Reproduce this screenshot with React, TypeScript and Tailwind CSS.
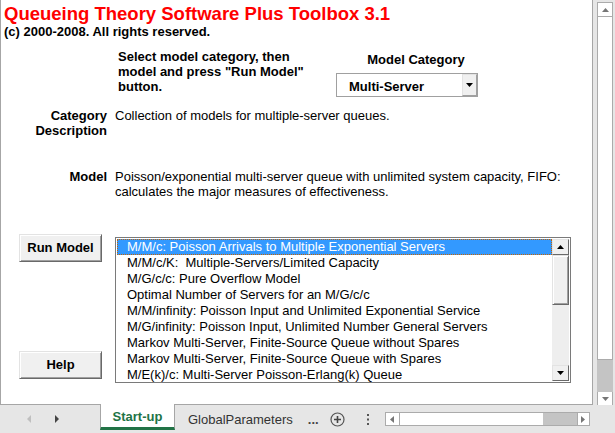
import React from 'react';

// Models offered for the Multi-Server category
const models = [
  'M/M/c: Poisson Arrivals to Multiple Exponential Servers',
  'M/M/c/K:  Multiple-Servers/Limited Capacity',
  'M/G/c/c: Pure Overflow Model',
  'Optimal Number of Servers for an M/G/c/c',
  'M/M/infinity: Poisson Input and Unlimited Exponential Service',
  'M/G/infinity: Poisson Input, Unlimited Number General Servers',
  'Markov Multi-Server, Finite-Source Queue without Spares',
  'Markov Multi-Server, Finite-Source Queue with Spares',
  'M/E(k)/c: Multi-Server Poisson-Erlang(k) Queue',
];

function Tri({ dir, color, w = 7, h = 4 }: { dir: 'up' | 'down' | 'left' | 'right'; color: string; w?: number; h?: number }) {
  const pts =
    dir === 'up' ? `0,${h} ${w},${h} ${w / 2},0` :
    dir === 'down' ? `0,0 ${w},0 ${w / 2},${h}` :
    dir === 'left' ? `${w},0 ${w},${h} 0,${h / 2}` :
    `0,0 0,${h} ${w},${h / 2}`;
  return (
    <svg width={w} height={h} viewBox={`0 0 ${w} ${h}`}>
      <polygon points={pts} fill={color} />
    </svg>
  );
}

function ClassicButton({ label, className = '' }: { label: string; className?: string }) {
  return (
    <div
      className={`h-[28px] w-[83px] flex items-center justify-center bg-[#f0f0f0] border border-[#e3e3e3] border-r-[#696969] border-b-[#696969] shadow-[inset_1px_1px_0_#ffffff,inset_-1px_-1px_0_#a0a0a0] text-[13px] font-bold ${className}`}
    >
      {label}
    </div>
  );
}

export default function App() {
  return (
    <div className="w-[615px] h-[433px] bg-[#e6e6e6] flex flex-col overflow-hidden font-['Liberation_Sans',Arial,sans-serif] text-black">
      {/* Sheet + vertical scrollbar */}
      <div className="flex h-[405px]">
        <div className="w-[593px] h-full bg-white border-l border-r border-b border-[#a6a6a6] flex flex-col">
          <h1 className="pl-[3px] pt-[3px] text-[18.5px] leading-[21px] font-bold text-[#ff0000] whitespace-nowrap">
            Queueing Theory Software Plus Toolbox 3.1
          </h1>
          <p className="pl-[3px] text-[13px] leading-[15px] font-bold">(c) 2000-2008. All rights reserved.</p>

          {/* Instructions + category selector */}
          <div className="flex mt-[10px]">
            <p className="ml-[117px] w-[205px] text-[13px] leading-[15px] font-bold">
              Select model category, then
              <br />
              model and press "Run Model"
              <br />
              button.
            </p>
            <div className="ml-[13px] w-[160px] pt-[3px] flex flex-col">
              <div className="text-[13px] leading-[15px] font-bold text-center">Model Category</div>
              <div className="mt-[6px] w-[142px] h-[24px] border border-[#a0a0a0] flex">
                <div className="flex-1 pl-[12px] pt-[5px] text-[13px] leading-[15px] font-bold">Multi-Server</div>
                <div className="w-[15px] h-[22px] bg-[#f0f0f0] border border-[#e3e3e3] border-r-[#a0a0a0] border-b-[#a0a0a0] flex items-center justify-center">
                  <Tri dir="down" color="#000" w={7} h={4} />
                </div>
              </div>
            </div>
          </div>

          {/* Category description */}
          <div className="grid grid-cols-[106px_1fr] gap-x-[8px] mt-[11px] text-[13px] leading-[15px]">
            <div className="font-bold text-right">
              Category
              <br />
              Description
            </div>
            <div>Collection of models for multiple-server queues.</div>
          </div>

          {/* Model description */}
          <div className="grid grid-cols-[106px_1fr] gap-x-[8px] mt-[31px] text-[13px] leading-[15px]">
            <div className="font-bold text-right">Model</div>
            <div>
              Poisson/exponential multi-server queue with unlimited system capacity, FIFO:
              <br />
              calculates the major measures of effectiveness.
            </div>
          </div>

          {/* Buttons + model list */}
          <div className="flex mt-[35px]">
            <div className="ml-[18px] flex flex-col">
              <ClassicButton label="Run Model" />
              <ClassicButton label="Help" className="mt-[89px]" />
            </div>
            <div className="ml-[13px] mt-[3px] w-[456px] h-[146px] border border-[#7a7a7a] p-px flex">
              <div className="flex-1 flex flex-col text-[13px] leading-[16px]">
                {models.map((m, i) => (
                  <div
                    key={m}
                    className={
                      i === 0
                        ? 'h-[16px] pl-[9px] whitespace-pre bg-[#3399ff] text-white border border-dotted border-[#c86400] leading-[14px]'
                        : 'h-[16px] pl-[10px] whitespace-pre'
                    }
                  >
                    {m}
                  </div>
                ))}
              </div>
              <div className="w-[17px] flex flex-col">
                <div className="h-[16px] bg-[#f0f0f0] border border-[#e3e3e3] border-r-[#696969] border-b-[#696969] flex items-center justify-center">
                  <Tri dir="up" color="#000" w={7} h={4} />
                </div>
                <div className="h-[50px] bg-[#f0f0f0] border border-[#e3e3e3] border-r-[#696969] border-b-[#696969] shadow-[inset_1px_1px_0_#ffffff,inset_-1px_-1px_0_#a0a0a0]" />
                <div className="h-[60px] bg-[#eeeeee]" />
                <div className="h-[16px] bg-[#f0f0f0] border border-[#e3e3e3] border-r-[#696969] border-b-[#696969] flex items-center justify-center">
                  <Tri dir="down" color="#000" w={7} h={4} />
                </div>
              </div>
            </div>
          </div>
        </div>

        {/* Vertical scrollbar */}
        <div className="ml-[4px] w-[16px] pt-[2px] flex flex-col">
          <div className="h-[15px] bg-white border border-[#ababab] flex items-center justify-center">
            <Tri dir="up" color="#767676" w={7} h={4} />
          </div>
          <div className="h-[343px] bg-white border-x border-b border-[#ababab]" />
          <div className="h-[32px] bg-[#c4c4c4]" />
          <div className="h-[13px] bg-white border-x border-[#ababab] flex items-center justify-center">
            <Tri dir="down" color="#767676" w={7} h={4} />
          </div>
        </div>
      </div>

      {/* Sheet tabs */}
      <div className="flex items-center h-[28px] text-[13px] leading-[15px]">
        <div className="w-[100px] flex items-center pl-[27px] gap-[24px]">
          <Tri dir="left" color="#bfbfbf" w={4} h={8} />
          <Tri dir="right" color="#444444" w={4} h={8} />
        </div>
        <div className="self-start -mt-px relative h-[26px] w-[75px] bg-white border-x border-[#a6a6a6] border-b-[3px] border-b-[#217346] flex items-center justify-center pt-px font-bold text-[#217346]">
          Start-up
        </div>
        <div className="ml-[13px] text-[#333333]">GlobalParameters</div>
        <div className="ml-[15px] text-[#444444] font-bold">...</div>
        <svg className="ml-[11px]" width="15" height="15" viewBox="0 0 15 15">
          <circle cx="7.5" cy="7.5" r="6.5" fill="none" stroke="#555555" strokeWidth="1.2" />
          <path d="M7.5 4v7M4 7.5h7" stroke="#444444" strokeWidth="1.6" />
        </svg>
        <svg className="ml-[21px]" width="4" height="13" viewBox="0 0 4 13">
          <rect x="1" y="1" width="2" height="2" fill="#555" />
          <rect x="1" y="5.5" width="2" height="2" fill="#555" />
          <rect x="1" y="10" width="2" height="2" fill="#555" />
        </svg>
        {/* Horizontal scrollbar */}
        <div className="ml-[15px] w-[205px] h-[14px] bg-white border border-[#ababab] flex">
          <div className="w-[14px] border-r border-[#ababab] flex items-center justify-center">
            <Tri dir="left" color="#767676" w={4} h={7} />
          </div>
          <div className="w-[143px]" />
          <div className="flex-1 bg-[#c4c4c4]" />
          <div className="w-[12px] border-l border-[#ababab] flex items-center justify-center">
            <Tri dir="right" color="#767676" w={4} h={7} />
          </div>
        </div>
      </div>
    </div>
  );
}
